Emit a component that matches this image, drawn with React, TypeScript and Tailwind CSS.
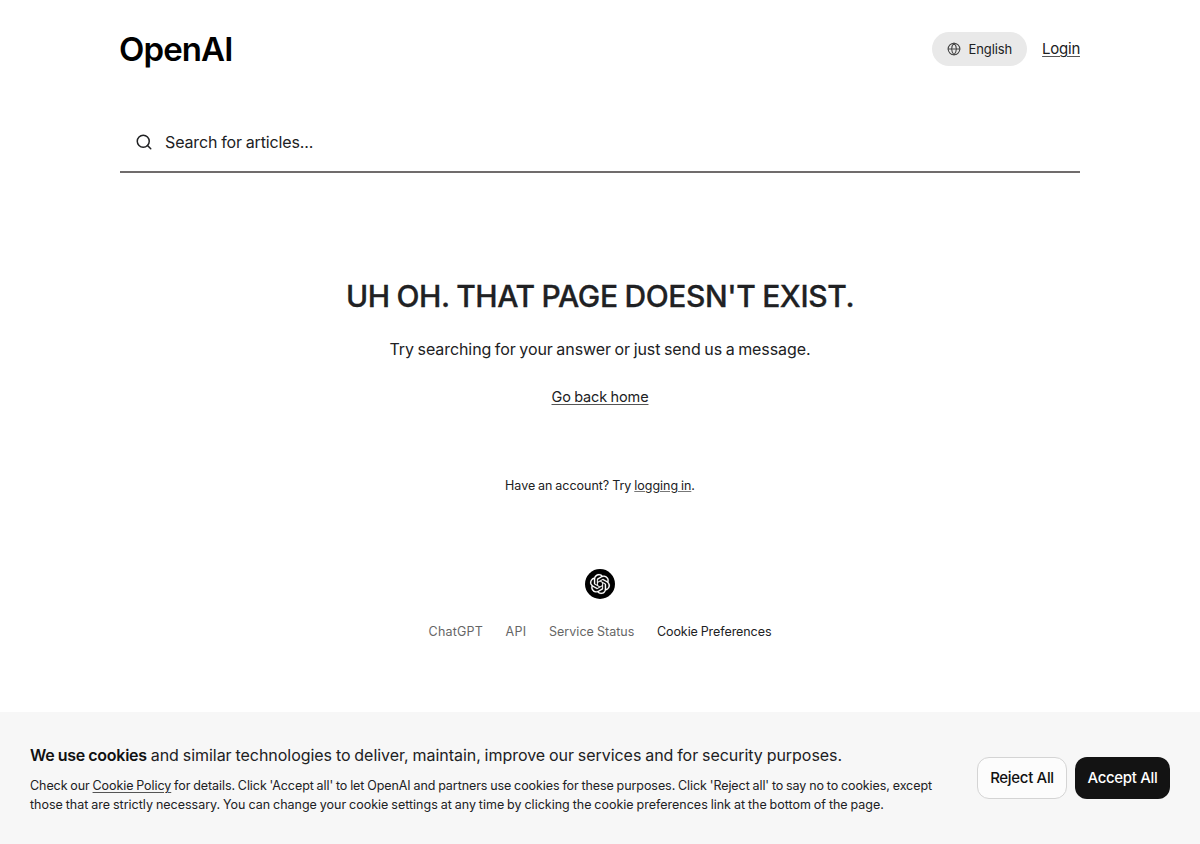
import { Search, Globe } from "lucide-react";
import { SiOpenai } from "react-icons/si";

export default function App() {
  return (
    <div className="flex h-[844px] flex-col bg-white font-['Inter',sans-serif] text-[#202123]">
      <div className="px-[120px] pt-8">
        <header className="flex h-[34px] items-center justify-between">
          <a className="-ml-px text-[33px] leading-[34px] font-semibold tracking-[-0.9px] text-black">OpenAI</a>
          <div className="flex items-center gap-[15px]">
            <button className="flex h-[34px] w-[95.5px] items-center justify-center gap-2 rounded-full bg-[#e9e9e9] text-[13px] tracking-[-0.1px]">
              <Globe size={14} strokeWidth={1.8} className="text-[#444]" /><span className="pt-px">English</span>
            </button>
            <a className="pt-px text-[15px] tracking-[-0.25px] underline decoration-[#555] underline-offset-2">Login</a>
          </div>
        </header>
        <div className="mt-[47px] flex h-[60px] items-center gap-[12px] border-b-2 border-[#706c6c] px-[15px]">
          <Search size={18} strokeWidth={2} />
          <span className="text-[16px] tracking-[-0.12px] [word-spacing:-0.6px]">Search for articles...</span>
        </div>
      </div>
      <main className="flex flex-col items-center pt-[103px]">
        <h1 className="text-[30px] leading-10 font-medium tracking-[-0.4px] [word-spacing:-0.8px] [-webkit-text-stroke:0.3px_#202123]">UH OH. THAT PAGE DOESN'T EXIST.</h1>
        <p className="mt-[21px] text-[16px] leading-6 tracking-[-0.08px] [word-spacing:-0.8px]">Try searching for your answer or just send us a message.</p>
        <a className="mt-6 text-[14.5px] leading-6 tracking-[-0.11px] underline decoration-[#555] underline-offset-2 [word-spacing:-0.6px]">Go back home</a>
        <p className="mt-[67px] text-[12.5px] leading-5 tracking-[-0.02px] [word-spacing:-0.6px]">Have an account? Try <a className="underline decoration-[#777]">logging in</a>.</p>
      </main>
      <footer className="mt-[73px] flex flex-col items-center">
        <div className="flex size-[30px] items-center justify-center rounded-full bg-black text-white">
          <SiOpenai size={20} className="overflow-visible stroke-white stroke-[0.2px]" />
        </div>
        <nav className="mt-[23px] flex gap-[22.5px] text-[12.5px] leading-5 text-[#666]">
          <a className="tracking-[0.2px]">ChatGPT</a>
          <a className="tracking-[0.3px]">API</a>
          <a className="tracking-[0.05px] [word-spacing:-0.6px]">Service Status</a>
          <a className="tracking-[-0.07px] text-[#202123] [word-spacing:-0.6px]">Cookie Preferences</a>
        </nav>
      </footer>
      <section className="mt-auto flex h-[132px] items-center justify-between bg-[#f7f7f7] px-[30px]">
        <div className="pt-px whitespace-nowrap">
          <p className="text-[16px] leading-6 tracking-[-0.035px] [word-spacing:-0.6px]">
            <b className="font-semibold tracking-[-0.24px] text-[#111]">We use cookies</b> and similar technologies to deliver, maintain, improve our services and for security purposes.
          </p>
          <p className="mt-[9px] text-[12.5px] leading-[19px] tracking-[-0.07px] [word-spacing:-0.6px]">
            Check our <a className="underline decoration-[#555] underline-offset-2">Cookie Policy</a> for details. Click 'Accept all' to let OpenAI and partners use cookies for these purposes. Click 'Reject all' to say no to cookies, except
            <br />
            <span className="tracking-[0px]">those that are strictly necessary. You can change your cookie settings at any time by clicking the cookie preferences link at the bottom of the page.</span>
          </p>
        </div>
        <div className="flex gap-2 text-[15px] font-medium tracking-[-0.32px]">
          <button className="h-[42px] w-[90px] rounded-xl border border-[#d4d4d4] bg-[#fcfcfc] text-[#111]">Reject All</button>
          <button className="h-[42px] w-[95px] rounded-xl bg-[#131313] text-white">Accept All</button>
        </div>
      </section>
    </div>
  );
}
